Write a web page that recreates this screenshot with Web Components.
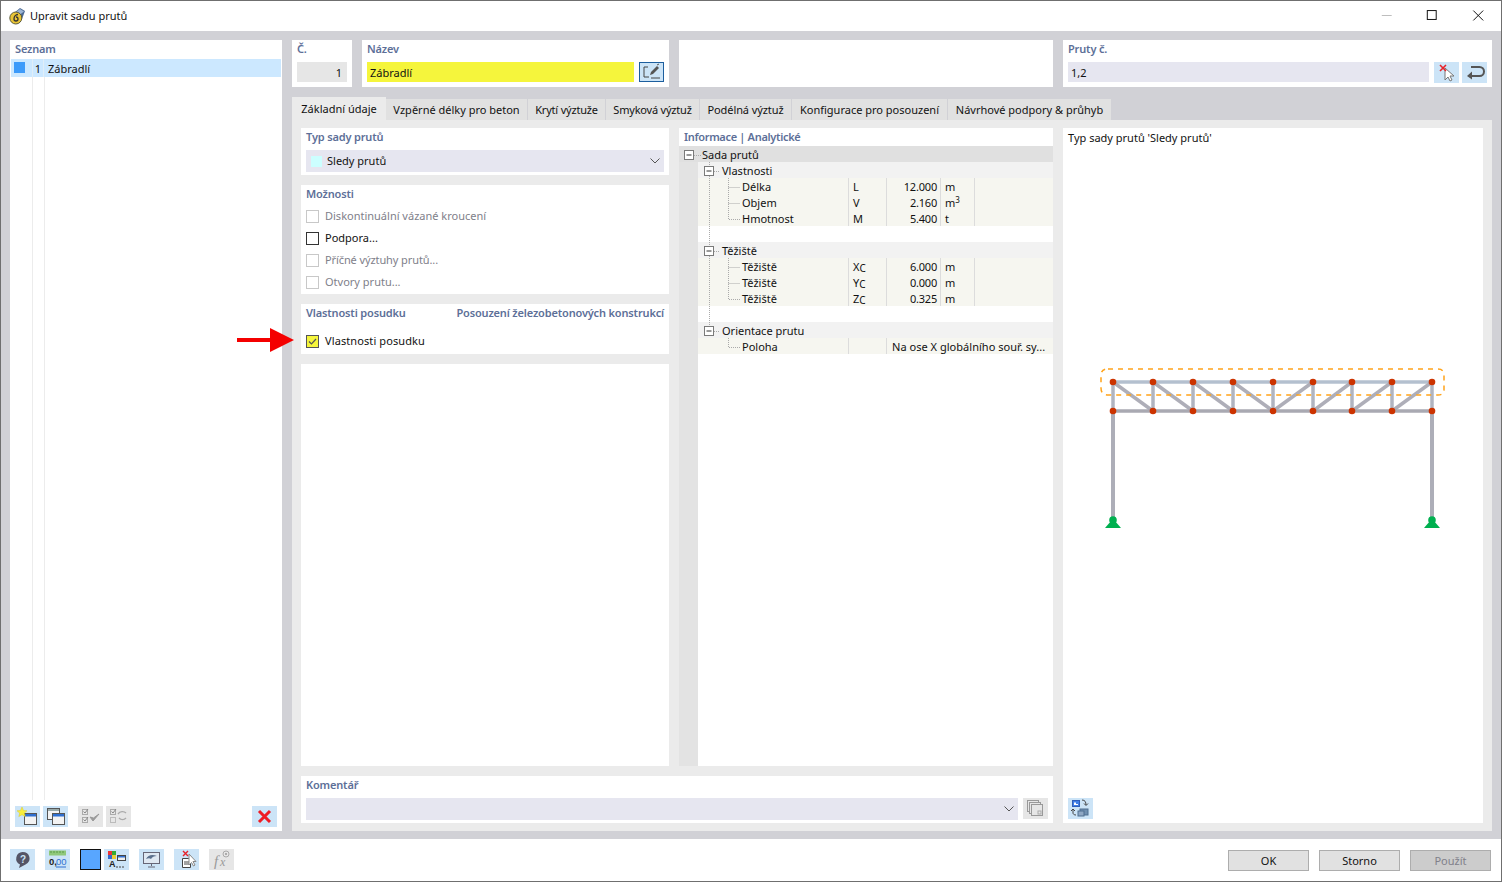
<!DOCTYPE html>
<html lang="cs"><head><meta charset="utf-8"><title>Upravit sadu prutů</title>
<style>
html,body{margin:0;padding:0;background:#fff}
body{font:11px/16px "Noto Sans","Open Sans",sans-serif;color:#111}
</style></head><body>
<rf-window caption="Upravit sadu prutů">
  <rf-list slot="left"></rf-list>
  <rf-top slot="top">
    <rf-panel label="Č." style="width:60px;height:47px"><rf-field kind="gray" align="right">1</rf-field></rf-panel>
    <rf-panel label="Název" style="width:307px;height:47px"><rf-row-f><rf-field kind="yellow" style="width:267px">Zábradlí</rf-field><rf-btn icon="edit" focus style="height:20px"></rf-btn></rf-row-f></rf-panel>
    <rf-panel style="width:374px;height:47px"></rf-panel>
    <rf-panel label="Pruty č." style="width:429px;height:47px"><rf-row-f><rf-field style="width:361px">1,2</rf-field><rf-btn icon="pick"></rf-btn><rf-btn icon="ret" style="margin-left:-2px;width:25px"></rf-btn></rf-row-f></rf-panel>
  </rf-top>
  <rf-tabs slot="tabs">
    <rf-tab active style="width:94px">Základní údaje</rf-tab><rf-tab style="width:142px">Vzpěrné délky pro beton</rf-tab><rf-tab style="width:78px;letter-spacing:-.2px">Krytí výztuže</rf-tab><rf-tab style="width:94px;letter-spacing:-.2px">Smyková výztuž</rf-tab><rf-tab style="width:92px;letter-spacing:-.08px">Podélná výztuž</rf-tab><rf-tab style="width:156px">Konfigurace pro posouzení</rf-tab><rf-tab style="width:164px">Návrhové podpory &amp; průhyb</rf-tab>
  </rf-tabs>
  <rf-tabpanel slot="panel">
    <rf-stack style="grid-column:1;grid-row:1">
      <rf-panel label="Typ sady prutů" tall style="height:47px"><rf-field kind="select" swatch tall>Sledy prutů</rf-field></rf-panel>
      <rf-panel label="Možnosti" style="height:109px;--gap:2px">
        <rf-check disabled>Diskontinuální vázané kroucení</rf-check>
        <rf-check>Podpora...</rf-check>
        <rf-check disabled style="letter-spacing:-.1px">Příčné výztuhy prutů...</rf-check>
        <rf-check disabled>Otvory prutu...</rf-check>
      </rf-panel>
      <rf-panel label="Vlastnosti posudku" right="Posouzení železobetonových konstrukcí" style="height:50px;--gap:8px"><rf-check checked style="letter-spacing:.1px">Vlastnosti posudku</rf-check><rf-arrow></rf-arrow></rf-panel>
      <rf-panel style="flex:1"></rf-panel>
    </rf-stack>
    <rf-tree style="grid-column:2;grid-row:1"></rf-tree>
    <rf-preview style="grid-column:3;grid-row:1 / span 2"></rf-preview>
    <rf-panel label="Komentář" tall style="grid-column:1 / span 2;grid-row:2;height:47px"><rf-row-f><rf-field kind="select" tall style="width:712px"></rf-field><rf-btn icon="copyg" off></rf-btn></rf-row-f></rf-panel>
  </rf-tabpanel>
  <rf-footer slot="footer"></rf-footer>
</rf-window>
<script>
const ICONS={
edit:'<path d="M9 5H5v10h5M12 16h9" fill="none" stroke="#444" stroke-width="1"/><path d="M11 13l1-3 6-6 2 2-6 6z" fill="#555"/><path d="M18 3l2-1" stroke="#555"/>',
pick:'<path d="M11 6v12l3-3 2 4 2-1-2-4h4z" fill="#fff" stroke="#777"/><path d="M6 3l6 6M12 3l-6 6" stroke="#e8232a" stroke-width="1.6"/>',
ret:'<path d="M9 5h8.5a4.5 4.5 0 0 1 0 9H8" fill="none" stroke="#555" stroke-width="2"/><path d="M10 9.5L5 14l5 3.500z" fill="#555"/>',
newi:'<rect x="9.500" y="7.500" width="12" height="11" fill="#f3f3f3" stroke="#555"/><rect x="10" y="8" width="11" height="2.500" fill="#2f6fd0"/><path d="M7 1l1.500 3.500 3.500.3-2.700 2.300.9 3.500L7 8.700l-3.200 1.900.9-3.500L2 4.800l3.500-.3z" fill="#f8ee3a" stroke="#d8c92a" stroke-width=".5"/>',
copy:'<rect x="4.500" y="2.500" width="12" height="11" fill="#f3f3f3" stroke="#555"/><rect x="5" y="3" width="11" height="2" fill="#9aa"/><rect x="9.500" y="7.500" width="12" height="11" fill="#f3f3f3" stroke="#555"/><rect x="10" y="8" width="11" height="2.500" fill="#2f6fd0"/>',
chk:'<rect x="4.500" y="3.500" width="5" height="5" fill="none" stroke="#aaa"/><rect x="4.500" y="11.500" width="5" height="5" fill="none" stroke="#aaa"/><path d="M5.500 5.500l1.500 1.500 3-4M5.500 13.500l1.500 1.500 3-4" fill="none" stroke="#888"/><path d="M12 11l3 4 6-7-5.500 4z" fill="#999" stroke="#999"/>',
swap:'<rect x="4.500" y="3.500" width="5" height="5" fill="none" stroke="#aaa"/><rect x="4.500" y="11.500" width="5" height="5" fill="none" stroke="#bbb"/><path d="M5.500 5.500l1.500 1.500 3-4" fill="none" stroke="#888"/><path d="M12 8c2-3 6-3 8-1M20 12c-2 2-5 2-7 0" fill="none" stroke="#aaa" stroke-width="1.400"/>',
del:'<path d="M7 5l11 11M18 5L7 16" stroke="#ef1c24" stroke-width="3"/>',
help:'<path d="M12.500 3a7 6.500 0 0 1 3 12.400L9 19l1-3.600A6.500 6.500 0 0 1 12.500 3z" fill="#556"/><text x="13" y="13.500" text-anchor="middle" font-family="Liberation Sans" font-weight="700" font-size="10" fill="#cce4f7">?</text>',
num:'<rect x="4" y="1.500" width="17" height="5" fill="#8fc87a"/><path d="M6 2v2M9 2v2M12 2v2M15 2v2M18 2v2" stroke="#5a9a4a"/><text x="4" y="16" font-family="Liberation Sans" font-size="9.500" font-weight="700" fill="#222">0,</text><text x="11" y="16" font-family="Liberation Sans" font-size="9.500" fill="#2f6fd0">00</text><path d="M11 18h10" stroke="#2f6fd0"/>',
color:'<rect x="4" y="2" width="4" height="4" fill="#e33"/><rect x="8" y="2" width="4" height="4" fill="#3a3"/><rect x="4" y="6" width="4" height="4" fill="#36c"/><rect x="8" y="6" width="4" height="4" fill="#ec3"/><rect x="13.500" y="6.500" width="8" height="5" fill="#eee" stroke="#444"/><rect x="14" y="7" width="7" height="1.500" fill="#2f6fd0"/><text x="5" y="18" font-family="Liberation Sans" font-weight="700" font-size="9" fill="#222">A</text><path d="M12 18h2M15 18h2M18 18h2" stroke="#444"/>',
view:'<rect x="4.500" y="3.500" width="16" height="11" fill="#dfe8f2" stroke="#667"/><path d="M7 10c2-4 6-5 11-3-3 0-5 1-6 3-1-1-3-1-5 0z" fill="#5b6f8c"/><path d="M12.500 15v2M9 18h7" stroke="#667"/>',
pick2:'<path d="M8.500 9.500h6l2 2v7h-8z" fill="#fff" stroke="#444"/><path d="M10 13h5M10 15h5" stroke="#444"/><path d="M15 5v11l2.500-2.500 2 3.500 1.500-1-2-3.500h3z" fill="#fff" stroke="#888"/><path d="M9 2l5 5M14 2L9 7" stroke="#e8232a" stroke-width="1.400"/>',
fx:'<text x="5" y="17" font-family="Liberation Serif" font-style="italic" font-size="15" fill="#999">f</text><text x="11" y="17" font-family="Liberation Serif" font-style="italic" font-size="12" fill="#999">x</text><circle cx="17" cy="5" r="3" fill="none" stroke="#aaa"/><circle cx="17" cy="5" r="1" fill="#999"/>',
copyg:'<rect x="4.500" y="2.500" width="11" height="11" fill="none" stroke="#999"/><rect x="6.500" y="4.500" width="11" height="11" fill="#e6e6e6" stroke="#999"/><rect x="8.500" y="6.500" width="11" height="11" fill="#e6e6e6" stroke="#999"/><rect x="15" y="13" width="3" height="3" fill="none" stroke="#aaa"/>',
sync:'<rect x="4.500" y="2.500" width="7" height="6" fill="#3f7fe8" stroke="#2f5fb8"/><path d="M6 7V4.500h2V6h2v1z" fill="#fff"/><rect x="12" y="11" width="8" height="6" fill="#6f8fb0" stroke="#4f6f90"/><rect x="10" y="13" width="6" height="5" fill="#8fa8c4" stroke="#4f6f90"/><path d="M14 2c3 0 4 2 4 5M16 5.500l2 2 2-2M5 11v4c0 1 1 2 3 2M3 13l2-2 2 2" fill="none" stroke="#444"/>'
};
function def(name,css,html){
  customElements.define(name,class extends HTMLElement{
    constructor(){super();this.attachShadow({mode:'open'});}
    connectedCallback(){
      const h=typeof html==='function'?html(this):html;
      this.shadowRoot.innerHTML='<style>'+css+'</style>'+h;
    }
  });
}
def('rf-window',`
:host{display:block;width:1502px;height:882px;box-sizing:border-box;border:1px solid #6f6f6f;background:#fff;overflow:hidden}
.title{height:30px;display:flex;align-items:center;font-size:11px;padding-left:8px}
.title svg.logo{margin-right:4px}
.title span{flex:1;color:#111}
.ctl{display:flex;align-items:center;padding-right:1px}
.ctl svg{width:45.500px;height:30px;display:block}
main{height:808px;box-sizing:border-box;background:#d1d1d6;padding:9px 9px 8px 9px;display:grid;grid-template-columns:272px 1200px;column-gap:10px}
.r{display:flex;flex-direction:column;min-width:0}
.foot{height:42px}
`,el=>`
<div class="title">
<svg class="logo" width="17" height="18" viewBox="0 0 17 18"><path d="M5 6L11 1l5 3-3 8z" fill="#4d6a94"/><path d="M7 5l4-3 4 2.500-4 3z" fill="#9db6d6"/><circle cx="6.800" cy="11" r="6" fill="#e9c435" stroke="#5b5b3a"/><path d="M9 7.500C6.500 7.500 5 9.500 5 12a2 2 0 1 0 2-2" fill="none" stroke="#333" stroke-width="1.300"/></svg>
<span>${el.getAttribute('caption')}</span>
<div class="ctl">
<svg viewBox="0 0 46 30"><path d="M18 14.500h10" stroke="#bdbdbd"/></svg>
<svg viewBox="0 0 46 30"><rect x="18.500" y="9.500" width="9" height="9" fill="none" stroke="#111"/></svg>
<svg viewBox="0 0 46 30"><path d="M18.500 9.500l10 10M28.500 9.500l-10 10" stroke="#111" fill="none"/></svg>
</div></div>
<main><slot name="left"></slot><div class="r"><slot name="top"></slot><slot name="tabs"></slot><slot name="panel"></slot></div></main>
<div class="foot"><slot name="footer"></slot></div>`);

def('rf-panel',`
:host{display:block;background:#fff;box-sizing:border-box;position:relative;min-width:0}
.h{display:flex;justify-content:space-between;padding:0 5px;height:18px;line-height:18px;font-weight:600;color:#5d6f98;font-size:11px;letter-spacing:-.16px}
.b{padding:4px 5px 0;display:flex;flex-direction:column;padding-top:var(--gap,4px)}
:host([tall]) .b{padding-top:4px}
`,el=>{const l=el.getAttribute('label'),r=el.getAttribute('right');return l?`<div class="h"><span>${l}</span>${r?`<span>${r}</span>`:''}</div><div class="b"><slot></slot></div>`:'<slot></slot>';});

def('rf-row-f',`:host{display:flex;column-gap:5px;align-items:flex-start}`,'<slot></slot>');

def('rf-field',`
:host{display:flex;align-items:center;box-sizing:border-box;height:20px;background:#e6e6f0;padding:1px 3px 0;font-size:11px;color:#111}
:host([tall]){height:22px;padding-left:5px;padding-top:0}
:host([kind=gray]){background:#e6e6e6;justify-content:flex-end;padding-right:5px}
:host([kind=yellow]){background:#f5f53c}
.sw{width:11px;height:11px;background:#ccffff;margin-right:5px}
.t{flex:1}
svg{margin-right:1px}
`,el=>`${el.hasAttribute('swatch')?'<i class="sw"></i>':''}<span class="t"><slot></slot></span>${el.getAttribute('kind')==='select'?'<svg width="10" height="6" viewBox="0 0 10 6"><path d="M.5 .5L5 5 9.500 .5" fill="none" stroke="#555"/></svg>':''}`);

def('rf-btn',`
:host{display:block;width:25px;height:21px;background:#cce4f7;box-sizing:border-box;flex:none}
:host([off]){background:#e6e6e6}
:host([focus]){border:1px solid #1c5e9e}
:host([focus]) svg{margin:-1px}
svg{display:block;width:25px;height:21px}
`,el=>`<svg viewBox="0 0 25 21">${ICONS[el.getAttribute('icon')]||''}</svg>`);

def('rf-top',`:host{display:flex;column-gap:10px;height:47px;margin-bottom:10px}`,'<slot></slot>');
def('rf-tabs',`:host{display:flex;height:23px;align-items:flex-end}`,'<slot></slot>');
def('rf-tab',`
:host{display:flex;align-items:center;justify-content:center;box-sizing:border-box;height:21px;background:#e1e1e1;border-right:1px solid #d1d1d6;font-size:11px;color:#111;white-space:nowrap}
:host([active]){height:23px;background:#ebebeb;border-right:0;padding-top:1px}
`,'<slot></slot>');
def('rf-tabpanel',`
:host{display:grid;height:711px;box-sizing:border-box;background:#ebebeb;padding:8px 9px;grid-template-columns:368px 374px 420px;grid-template-rows:638px 47px;gap:10px}
`,'<slot></slot>');
def('rf-stack',`:host{display:flex;flex-direction:column;row-gap:10px;min-height:0}`,'<slot></slot>');

def('rf-check',`
:host{display:flex;align-items:center;height:22px;font-size:11px;color:#111;position:relative}
:host([disabled]){color:#80808a}
i{width:13px;height:13px;box-sizing:border-box;border:1px solid #333;background:#fff;margin:0 6px 0 0;display:block;flex:none}
:host([disabled]) i{border-color:#c8c8c8}
:host([checked]) i{background:#f5f53c;border-color:#555}
svg{display:block}
`,el=>`<i>${el.hasAttribute('checked')?'<svg width="11" height="11" viewBox="0 0 11 11"><path d="M2 5.500l2.500 2.500L9 3" fill="none" stroke="#555" stroke-width="1.200"/></svg>':''}</i><span><slot></slot></span>`);

def('rf-arrow',`:host{display:block;position:absolute;left:-64px;top:24px;width:58px;height:24px}svg{display:block}`,
'<svg width="58" height="24" viewBox="0 0 58 24"><path d="M0 10h33V0l24 12-24 12V14H0z" fill="#f40000"/></svg>');

def('rf-list',`
:host{display:flex;flex-direction:column;background:#fff;height:791px;box-sizing:border-box}
.h{height:19px;line-height:18px;padding-left:5px;font-weight:600;color:#5d6f98;font-size:11px;letter-spacing:-.16px}
.sel{margin:0 1px;height:18px;background:#cce8ff;display:grid;grid-template-columns:21px 12px 1fr;align-items:center;font-size:11px;color:#111}
.sel i{display:block;width:11px;height:11px;background:#3d9bfa;margin-left:3px;margin-top:-1px}
.sel b{font-weight:400;text-align:right;border-left:1px solid #e0eef8;height:18px;line-height:20px;border-right:1px solid #e0eef8;padding-right:2px}
.sel span{padding-left:4px;line-height:20px;height:18px}
.lines{flex:none;height:723px;margin-left:22px;width:13px;box-sizing:border-box;border-left:1px solid #ececec;border-right:1px solid #ececec}
.tb{display:flex;padding:6px 5px 0 5px;column-gap:3px}
.sp{flex:1}
rf-btn:nth-child(2){margin-right:7px}
`,`<div class="h">Seznam</div><div class="sel"><i></i><b>1</b><span>Zábradlí</span></div><div class="lines"></div>
<div class="tb"><rf-btn icon="newi"></rf-btn><rf-btn icon="copy"></rf-btn><rf-btn icon="chk" off></rf-btn><rf-btn icon="swap" off></rf-btn><div class="sp"></div><rf-btn icon="del"></rf-btn></div>`);

const XS=s=>`${s[0]}<small>${s[1]}</small>`;
def('rf-tree',`
:host{display:flex;flex-direction:column;background:#fff;position:relative;font-size:11px;color:#111;min-height:0}
.h{height:18px;line-height:18px;padding-left:5px;font-weight:600;color:#5d6f98;letter-spacing:-.32px}
.body{flex:1;background:#e3e3e3;position:relative;display:flex;flex-direction:column}
.inner{flex:1;margin-left:19px;background:#fff;display:flex;flex-direction:column}
.r{height:16px;line-height:17px;box-sizing:border-box;white-space:nowrap}
.top{margin-left:-19px;background:#e0e0e0;padding-left:23px}
.g{background:#f2f2f2;padding-left:24px}
.l{background:#f6f6f0;display:grid;grid-template-columns:151px 38px 54px 34px 1fr}
.l>*{border-right:1px solid #dcdcdc;height:16px;box-sizing:border-box}
.l>:last-child{border:0}
.n{padding-left:44px}.s{padding-left:4px}.v{text-align:right;padding-right:3px;letter-spacing:-.2px}.u{padding-left:4px}
.w{grid-column:3 / span 3;padding-left:5px;letter-spacing:.03px}
small{font-size:10px;position:relative;top:1px}
sup{font-size:8px;line-height:0;vertical-align:baseline;position:relative;top:-4px}
.e{height:16px}
svg{position:absolute;left:0;top:0;pointer-events:none}
`,()=>{
const leaf=(n,s,v,u)=>`<div class="r l"><span class="n">${n}</span><span class="s">${s}</span><span class="v">${v}</span><span class="u">${u}</span><span></span></div>`;
const boxes=[[10,9],[30,25],[30,105],[30,185]].map(([x,y])=>`<rect x="${x-4.5}" y="${y-4.5}" width="9" height="9" fill="#fff" stroke="#7a7a7a"/><path d="M${x-2.5} ${y}h5" stroke="#333"/>`).join('');
const dots=(d)=>`<path d="${d}" fill="none" stroke="#aaa" stroke-dasharray="1 1"/>`;
return `<div class="h">Informace | Analytické</div><div class="body"><div class="inner">
<div class="r top">Sada prutů</div>
<div class="r g">Vlastnosti</div>
${leaf('Délka','L','12.000','m')}${leaf('Objem','V','2.160','m<sup>3</sup>')}${leaf('Hmotnost','M','5.400','t')}
<div class="e"></div>
<div class="r g">Těžiště</div>
${leaf('Těžiště',XS('XC'),'6.000','m')}${leaf('Těžiště',XS('YC'),'0.000','m')}${leaf('Těžiště',XS('ZC'),'0.325','m')}
<div class="e"></div>
<div class="r g">Orientace prutu</div>
<div class="r l"><span class="n">Poloha</span><span></span><span class="w">Na ose X globálního souř. sy...</span></div>
</div>
<svg width="374" height="240" viewBox="0 0 374 240">
${dots('M30.500 16V185M15 9.500h7M35 25.500h6M35 105.500h6M35 185.500h6M49.500 32V73.500H61M49.500 41.500H61M49.500 57.500H61M49.500 112V153.500H61M49.500 121.500H61M49.500 137.500H61M49.500 192V201.500H61')}
${boxes}
</svg></div>`;});

def('rf-preview',`
:host{display:flex;flex-direction:column;background:#fff;font-size:11px;color:#111;min-height:0;box-sizing:border-box;padding-bottom:4px}
.t{height:20px;line-height:20px;padding-left:5px}
svg{display:block;margin-top:200px}
.sp{flex:1}
rf-btn{margin-left:5px}
`,()=>{
const xs=[1113,1153,1193,1233,1273,1313,1352,1392,1432];
const T=382,B=411;
let d='',n='';
xs.forEach((x,i)=>{d+=`<path d="M${x} ${T}V${B}" stroke="#b0b4c0" stroke-width="3.500"/>`;
 n+=`<circle cx="${x}" cy="${T}" r="3.300" fill="#cc3300"/><circle cx="${x}" cy="${B}" r="3.300" fill="#cc3300"/>`;
 if(i<8){const x2=xs[i+1];d+=i<4?`<path d="M${x} ${T}L${x2} ${B}" stroke="#aeaeb8" stroke-width="3.500"/>`:`<path d="M${x} ${B}L${x2} ${T}" stroke="#aeaeb8" stroke-width="3.500"/>`;}});
const sup=x=>`<path d="M${x-8} 528L${x-2} 521h4L${x+8} 528z" fill="#00b050"/><circle cx="${x}" cy="520" r="3.800" fill="#00b050"/>`;
return `<div class="t">Typ sady prutů 'Sledy prutů'</div>
<svg width="420" height="240" viewBox="1063 348 420 240">
<path d="M1113 411V522M1432 411V522" stroke="#adaeb8" stroke-width="4"/>
<path d="M1113 382H1432" stroke="#b4c0cf" stroke-width="3.500"/>
${d}<path d="M1113 411H1432" stroke="#a9a9b2" stroke-width="3.500"/>
<path d="M1108 369H1438Q1444 369 1444 375V390Q1444 395 1438 395H1108Q1101 395 1101 388V375Q1101 369 1108 369Z" fill="none" stroke="#ffa31a" stroke-width="1.500" stroke-dasharray="5 5"/>
${n}${sup(1113)}${sup(1432)}
</svg><div class="sp"></div><rf-btn icon="sync"></rf-btn>`;});

def('rf-footer',`
:host{display:flex;height:42px;box-sizing:border-box;padding:10px 10px 0 9px;align-items:flex-start}
.sw{width:21px;height:21px;box-sizing:border-box;border:1px solid #111;background:#58a6ff;margin:0 3px 0 10px}
rf-btn{margin-left:10px}
style+rf-btn{margin-left:0}
.sw+rf-btn{margin-left:0}
.sp{flex:1}
.b{width:81px;height:21px;box-sizing:border-box;border:1px solid #adadad;background:#e1e1e1;text-align:center;line-height:20px;font-size:11px;color:#111;margin:1px 0 0 10px}
.d{background:#ccc;color:#80808a}
`,`<rf-btn icon="help"></rf-btn><rf-btn icon="num"></rf-btn><div class="sw"></div><rf-btn icon="color"></rf-btn><rf-btn icon="view"></rf-btn><rf-btn icon="pick2"></rf-btn><rf-btn icon="fx" off></rf-btn><div class="sp"></div><div class="b">OK</div><div class="b">Storno</div><div class="b d">Použít</div>`);
</script>
</body></html>
